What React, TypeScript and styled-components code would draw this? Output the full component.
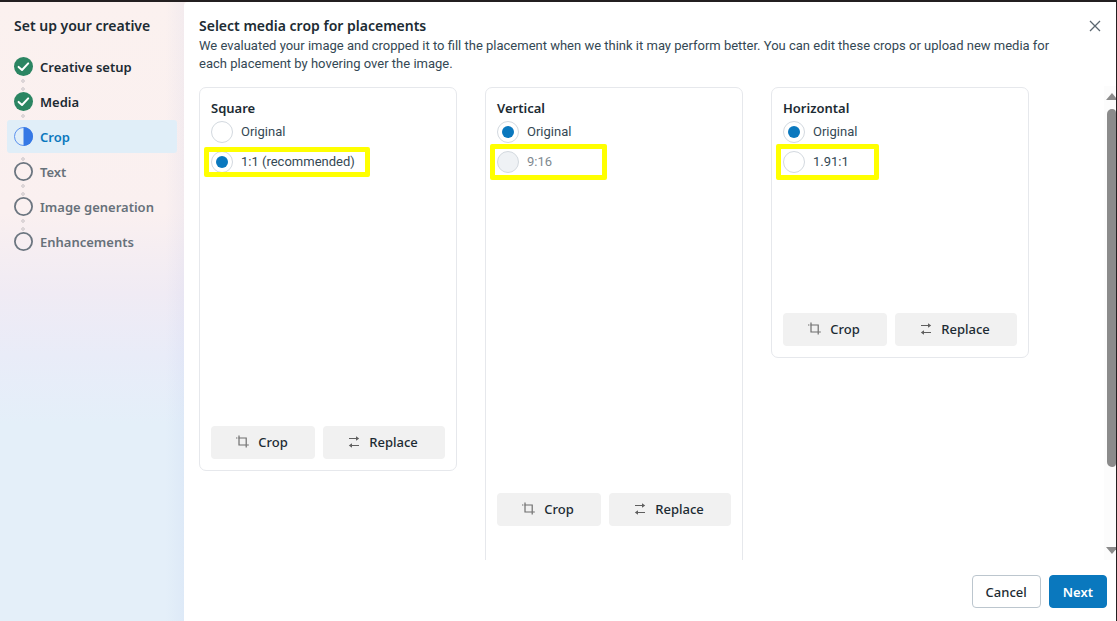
import React from "react";
import styled, { createGlobalStyle, css } from "styled-components";

const textFont = `Roboto, "Noto Sans", sans-serif`;

const GlobalStyle = createGlobalStyle`
  *, *::before, *::after { box-sizing: border-box; }
  body {
    margin: 0;
    background: #231f20;
    color: #1c2b33;
    font-family: "Noto Sans", "Open Sans", sans-serif;
    font-size: 13px;
    line-height: 18px;
  }
  button, input { font: inherit; color: inherit; margin: 0; }
  h1, h2, h3, p, ol, fieldset { margin: 0; padding: 0; border: 0; }
`;

const Window = styled.div`
  display: flex;
  height: 100vh;
  border-top: 2px solid #231f20;
  border-right: 1px solid #231f20;
  background: linear-gradient(to bottom, #fbf1ef 0%, #faf0f0 34%, #f0ebf4 47%, #e9ecf8 57%, #e4eff9 68%, #e4eff9 100%);
`;

const Sidebar = styled.nav`
  flex: none;
  width: 184px;
  padding: 14px 7px;
  isolation: isolate;
  background: linear-gradient(90deg, transparent 90%, rgba(100, 130, 220, 0.05));
`;

const SidebarTitle = styled.h2`
  padding-left: 7px;
  font-size: 14px;
  line-height: 20px;
  font-weight: 600;
`;

const Steps = styled.ol`
  display: flex;
  flex-direction: column;
  gap: 2px;
  margin-top: 14px;
  list-style: none;
`;

type StepState = "done" | "current" | "todo";

const StepRow = styled.li<{ $state: StepState }>`
  position: relative;
  width: 170px;
  border-radius: 3px;
  color: ${({ $state }) => ($state === "done" ? "#1c2b33" : $state === "current" ? "#0a78be" : "#67717a")};
  background: ${({ $state }) => ($state === "current" ? "#e0eef8" : "none")};

  &:not(:last-child)::after {
    content: "";
    position: absolute;
    z-index: -1;
    left: 14px;
    top: 29px;
    width: 4px;
    height: 12px;
    background:
      radial-gradient(circle, #dcd5d7 2px, transparent 2px) 0 0 / 4px 4px no-repeat,
      radial-gradient(circle, #dcd5d7 2px, transparent 2px) 0 8px / 4px 4px no-repeat;
  }
`;

const StepLink = styled.a`
  display: flex;
  align-items: center;
  gap: 7px;
  height: 33px;
  padding-left: 7px;
  color: inherit;
  font-weight: 600;
  text-decoration: none;
  white-space: nowrap;
`;

const Main = styled.main`
  flex: 1;
  min-width: 0;
  display: flex;
  flex-direction: column;
  background: #fff;
  border-top-left-radius: 4px;
`;

const Header = styled.header`
  display: flex;
  align-items: flex-start;
  justify-content: space-between;
  padding: 14px 11px 13px 15px;
`;

const Intro = styled.div`
  max-width: 870px;
`;

const IntroText = styled.p`
  margin-top: 1px;
  color: #344854;
  font-family: ${textFont};
`;

const PageTitle = styled.h1`
  font-size: 14px;
  line-height: 20px;
  font-weight: 600;
`;

const CloseButton = styled.button`
  display: grid;
  place-items: center;
  width: 20px;
  height: 20px;
  padding: 0;
  border: 0;
  background: none;
  cursor: pointer;
`;

const ScrollArea = styled.div`
  flex: 1;
  min-height: 0;
  display: flex;
  justify-content: space-between;
`;

const Placements = styled.div`
  flex: 1;
  display: grid;
  grid-template-columns: repeat(3, minmax(0, 1fr));
  align-items: start;
  gap: 28px;
  padding: 1px 75px 0 15px;
  overflow: hidden;
`;

const ScrollTrack = styled.div`
  display: flex;
  flex-direction: column;
  align-items: flex-end;
  gap: 9px;
  width: 12px;
  padding: 7px 0 6px;
  overflow: hidden;
  background: #fcfcfc;
`;

const ScrollThumb = styled.div`
  flex: 0 1 358px;
  width: 9px;
  margin-bottom: auto;
  border-radius: 5px 4px 4px 5px;
  background: #8b8b8b;
`;

const Card = styled.section`
  padding: 11px;
  border: 1px solid #e6e8ec;
  border-radius: 7px;
`;

const CardTitle = styled.h3`
  font-size: 13px;
  line-height: 18px;
  font-weight: 600;
`;

const Options = styled.fieldset`
  display: flex;
  flex-direction: column;
  gap: 8px;
  margin-top: 4px;
`;

const Option = styled.label<{ $disabled?: boolean }>`
  position: relative;
  display: flex;
  align-items: center;
  gap: 8px;
  height: 22px;
  color: ${({ $disabled }) => ($disabled ? "#808990" : "#344854")};
  font-family: ${textFont};
`;

const Radio = styled.input.attrs({ type: "radio" })`
  appearance: none;
  display: grid;
  place-items: center;
  width: 22px;
  height: 22px;
  border: 1px solid #d3d9df;
  border-radius: 50%;
  background: #fff;

  &:checked::before {
    content: "";
    width: 12px;
    height: 12px;
    border-radius: 50%;
    background: #0a78be;
  }
  &:disabled { background: #eff2f5; }
`;

const Highlight = styled.span<{ $width: number; $tall?: boolean }>`
  position: absolute;
  left: -7px;
  top: ${({ $tall }) => ($tall ? -7 : -4)}px;
  width: ${({ $width }) => $width}px;
  height: ${({ $tall }) => ($tall ? 36 : 30)}px;
  border: 5px solid #ff0;
  border-radius: 2px;
  pointer-events: none;
`;

const Preview = styled.div<{ $height: number }>`
  height: ${({ $height }) => $height}px;
`;

const Actions = styled.div`
  display: grid;
  grid-template-columns: 104fr 122fr;
  gap: 8px;
`;

const buttonBase = css`
  display: flex;
  align-items: center;
  justify-content: center;
  height: 33px;
  border-radius: 4px;
  cursor: pointer;
`;

const ActionButton = styled.button`
  ${buttonBase}
  gap: 9px;
  padding: 0 2px 2px 0;
  border: 0;
  background: #f1f1f1;
  font-weight: 500;
`;

const Footer = styled.footer`
  display: flex;
  justify-content: flex-end;
  gap: 8px;
  padding: 15px 9px 13px;
`;

const FooterButton = styled.button<{ $primary?: boolean }>`
  ${buttonBase}
  padding: 0 13px;
  border: 1px solid ${({ $primary }) => ($primary ? "#0a78be" : "#bcc6ce")};
  background: ${({ $primary }) => ($primary ? "#0a78be" : "#fff")};
  color: ${({ $primary }) => ($primary ? "#fff" : "#1c2b33")};
  font-weight: ${({ $primary }) => ($primary ? 600 : 500)};
`;

const StepIcon = ({ state }: { state: StepState }) => (
  <svg width="19" height="19" viewBox="0 0 19 19" fill="none" aria-hidden="true">
    {state === "done" && (
      <>
        <circle cx="9.5" cy="9.5" r="9.5" fill="#2b8562" />
        <path d="M4.6 9.9 8 13l6.2-6.6" stroke="#fff" strokeWidth="2" strokeLinecap="round" strokeLinejoin="round" />
      </>
    )}
    {state === "current" && (
      <>
        <circle cx="9.5" cy="9.5" r="9" stroke="#5d93ee" />
        <path d="M9.5 0a9.5 9.5 0 0 1 0 19z" fill="#3578e5" />
      </>
    )}
    {state === "todo" && <circle cx="9.5" cy="9.5" r="8.6" stroke="#6c7680" strokeWidth="1.8" />}
  </svg>
);

const CropIcon = () => (
  <svg width="13" height="13" viewBox="0 0 13 13" fill="none" stroke="#6f6f6f" strokeWidth="1.2" aria-hidden="true">
    <path d="M0 3h1.4M2.2 3h8v9.6M3 .4V10h7M10.9 10h1.9" />
  </svg>
);

const ReplaceIcon = () => (
  <svg width="12" height="12" viewBox="0 0 12 12" fill="none" stroke="#5f5f5f" strokeWidth="1.2" aria-hidden="true">
    <path d="M1 2.5h9M2 9.5h9" />
    <path d="M8 .2 11.2 2.5 8 4.8zM4 7.2.8 9.5 4 11.8z" fill="#5f5f5f" stroke="none" />
  </svg>
);

const steps: { label: string; state: StepState }[] = [
  { label: "Creative setup", state: "done" },
  { label: "Media", state: "done" },
  { label: "Crop", state: "current" },
  { label: "Text", state: "todo" },
  { label: "Image generation", state: "todo" },
  { label: "Enhancements", state: "todo" },
];

const placements = [
  { name: "Square", ratio: "1:1 (recommended)", ratioChosen: true, disabled: false, mark: 166, tall: false, preview: 253, space: 0 },
  { name: "Vertical", ratio: "9:16", ratioChosen: false, disabled: true, mark: 117, tall: true, preview: 320, space: 60 },
  { name: "Horizontal", ratio: "1.91:1", ratioChosen: false, disabled: false, mark: 103, tall: true, preview: 140, space: 0 },
];

export default function App() {
  return (
    <>
      <GlobalStyle />
      <Window>
        <Sidebar aria-label="Setup steps">
          <SidebarTitle>Set up your creative</SidebarTitle>
          <Steps>
            {steps.map(({ label, state }) => (
              <StepRow key={label} $state={state}>
                <StepLink href="#" aria-current={state === "current" ? "step" : undefined}>
                  <StepIcon state={state} />
                  {label}
                </StepLink>
              </StepRow>
            ))}
          </Steps>
        </Sidebar>
        <Main>
          <Header>
            <Intro>
              <PageTitle>Select media crop for placements</PageTitle>
              <IntroText>
                We evaluated your image and cropped it to fill the placement when we think it may perform better. You can
                edit these crops or upload new media for each placement by hovering over the image.
              </IntroText>
            </Intro>
            <CloseButton aria-label="Close">
              <svg width="12" height="12" viewBox="0 0 12 12" stroke="#5b6770" strokeWidth="1.3" aria-hidden="true">
                <path d="m1 1 10 10M11 1 1 11" />
              </svg>
            </CloseButton>
          </Header>
          <ScrollArea>
            <Placements>
              {placements.map((p) => (
                <Card key={p.name}>
                  <CardTitle>{p.name}</CardTitle>
                  <Options aria-label={p.name}>
                    <Option>
                      <Radio name={p.name} defaultChecked={!p.ratioChosen} />
                      Original
                    </Option>
                    <Option $disabled={p.disabled}>
                      <Radio name={p.name} defaultChecked={p.ratioChosen} disabled={p.disabled} />
                      {p.ratio}
                      <Highlight $width={p.mark} $tall={p.tall} />
                    </Option>
                  </Options>
                  <Preview $height={p.preview} />
                  <Actions>
                    <ActionButton>
                      <CropIcon />
                      Crop
                    </ActionButton>
                    <ActionButton>
                      <ReplaceIcon />
                      Replace
                    </ActionButton>
                  </Actions>
                  {p.space > 0 && <Preview $height={p.space} />}
                </Card>
              ))}
            </Placements>
            <ScrollTrack aria-hidden="true">
              <svg width="10" height="7" viewBox="0 0 10 7" fill="#8b8b8b"><path d="M0 7 6 0l4 4.7V7z" /></svg>
              <ScrollThumb />
              <svg width="10" height="7" viewBox="0 0 10 7" fill="#8b8b8b"><path d="M0 0 6 7l4-4.7V0z" /></svg>
            </ScrollTrack>
          </ScrollArea>
          <Footer>
            <FooterButton>Cancel</FooterButton>
            <FooterButton $primary>Next</FooterButton>
          </Footer>
        </Main>
      </Window>
    </>
  );
}
